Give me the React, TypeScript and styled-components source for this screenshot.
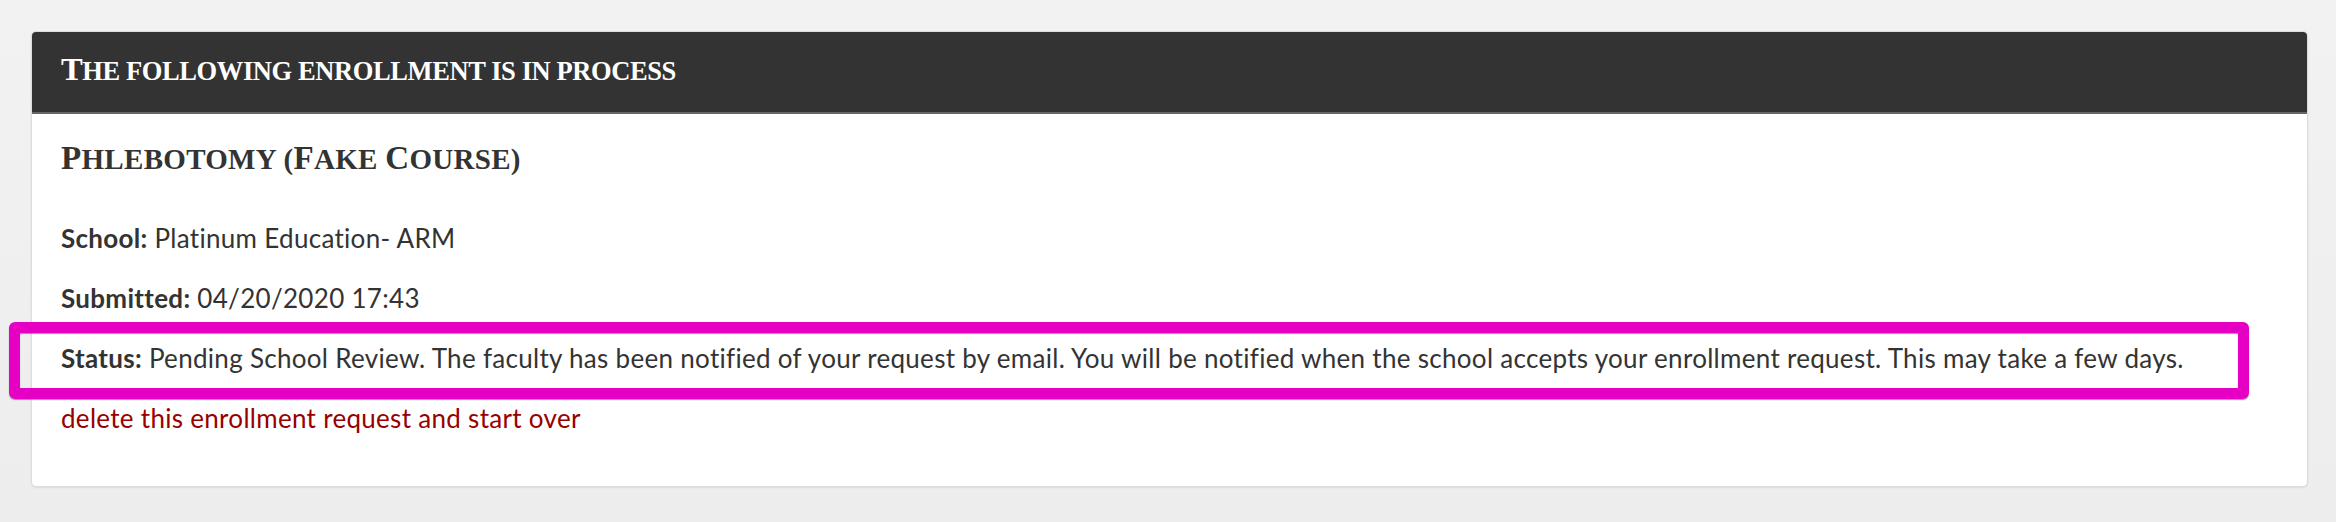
import styled, { createGlobalStyle } from 'styled-components';

const GlobalStyle = createGlobalStyle`
  html, body {
    margin: 0;
    padding: 0;
  }
  body {
    background: linear-gradient(#f2f2f2, #ededed);
    min-height: 522px;
    font-family: Lato, 'Noto Sans', sans-serif;
    color: #333;
  }
`;

// Cinzel-like small caps: capitals get a bigger size than the rest
const smallCaps = (text: string) =>
  text
    .split(/([A-Z])/)
    .filter(Boolean)
    .map((part, i) =>
      /^[A-Z]$/.test(part) ? <Initial key={i}>{part}</Initial> : part
    );

const Enrollment = () => {
  return (
    <Page>
      <GlobalStyle />
      <Card>
        <CardHeader>
          <HeaderTitle>
            {smallCaps('The following enrollment is in process')}
          </HeaderTitle>
        </CardHeader>
        <CardBody>
          <CourseTitle>{smallCaps('Phlebotomy (Fake Course)')}</CourseTitle>
          <Row>
            <Label>School:</Label> Platinum Education- ARM
          </Row>
          <Row>
            <Label>Submitted:</Label> 04/20/2020 17:43
          </Row>
          <Row>
            <Highlight />
            <Label>Status:</Label> Pending School Review. The faculty has been
            notified of your request by email. You will be notified when the
            school accepts your enrollment request. This may take a few days.
          </Row>
          <Row>
            <DeleteLink href='#'>
              delete this enrollment request and start over
            </DeleteLink>
          </Row>
        </CardBody>
      </Card>
    </Page>
  );
};

const Page = styled.div`
  padding: 31px 28px 0 31px;
`;

const Card = styled.div`
  background: #fff;
  border: 1px solid #dcdcdc;
  border-radius: 5px;
  box-shadow: 0 1px 2px rgba(0, 0, 0, 0.08);
`;

const CardHeader = styled.div`
  background: #333;
  border-bottom: 2px solid #666;
  border-radius: 4px 4px 0 0;
  padding: 17px 29px 21px;
`;

const HeaderTitle = styled.h3`
  margin: 0;
  font-family: 'Liberation Serif', 'DejaVu Serif', serif;
  font-weight: bold;
  font-size: 26.5px;
  line-height: 40px;
  text-transform: uppercase;
  color: #fff;
  letter-spacing: -0.4px;
`;

const Initial = styled.span`
  font-size: 1.23em;
`;

const CardBody = styled.div`
  padding: 24px 29px 50px;
`;

const CourseTitle = styled.h2`
  margin: 0 0 41px;
  font-family: 'Liberation Serif', 'DejaVu Serif', serif;
  font-weight: bold;
  font-size: 29px;
  line-height: 40px;
  text-transform: uppercase;
  letter-spacing: 0.3px;
  color: #333;
  & ${Initial} {
    font-size: 1.14em;
  }
`;

const Row = styled.p`
  position: relative;
  margin: 0 0 24px;
  font-size: 26px;
  line-height: 36px;
  letter-spacing: 0.3px;
  color: #333;
  &:last-child {
    margin-bottom: 0;
  }
`;

const Label = styled.strong`
  font-weight: bold;
`;

const Highlight = styled.span`
  position: absolute;
  left: -52px;
  right: 29px;
  top: -18px;
  bottom: -23px;
  border: 11.5px solid #e500c4;
  border-radius: 6px;
  box-shadow: 0 1px 1px rgba(0, 0, 0, 0.4), inset 0 1px 1px rgba(0, 0, 0, 0.4);
  pointer-events: none;
`;

const DeleteLink = styled.a`
  color: #990000;
  text-decoration: none;
`;

export default Enrollment;
